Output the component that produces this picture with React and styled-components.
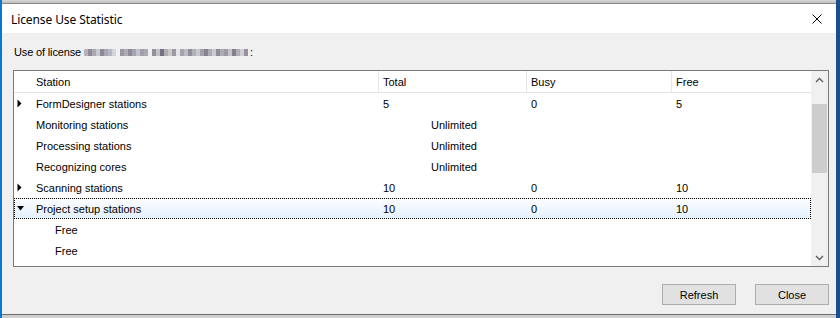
import React from 'react';
import styled, { createGlobalStyle } from 'styled-components';

const GlobalStyle = createGlobalStyle`
  html, body {
    margin: 0;
    padding: 0;
    background: #cfcfcf;
  }
  body {
    font-family: "Liberation Sans", Arial, sans-serif;
    font-size: 11px;
    color: #000;
  }
`;

const Desktop = styled.div`
  width: 840px;
  height: 318px;
  box-sizing: border-box;
  display: flex;
  flex-direction: column;
  padding: 3px 0 3px 0;
  border-left: 2px solid #0a78d2;
  border-right: 4px solid #17508f;
  background: linear-gradient(#d8d8d8, #bdbdbd 3px, #cfcfcf 3px);
`;

const Window = styled.div`
  flex: 1;
  display: flex;
  flex-direction: column;
  background: #f0f0f0;
  border-top: 1px solid #8a8a8a;
  border-bottom: 1px solid #6e6e6e;
`;

const TitleBar = styled.div`
  height: 29px;
  display: flex;
  align-items: center;
  justify-content: space-between;
  padding: 0 10px 0 9px;
  background: #fff;
`;

const Title = styled.span`
  font-family: "Noto Sans", "Liberation Sans", sans-serif;
  font-size: 12px;
  padding-top: 1px;
  letter-spacing: -0.1px;
`;

const CloseGlyph = styled.svg`
  width: 10px;
  height: 10px;
  margin-right: 4px;
`;

const Body = styled.div`
  flex: 1;
  display: flex;
  flex-direction: column;
  padding: 12px 7px 0 11px;
`;

const LicenseLine = styled.div`
  display: flex;
  align-items: center;
  height: 13px;
  padding-left: 1px;
  letter-spacing: -0.15px;
`;

const Blur = styled.span`
  display: inline-flex;
  align-items: center;
  height: 7px;
  margin: 1px 2px 0 3px;
`;

const BlurCell = styled.span`
  width: 4px;
  height: 7px;
  background: ${(p) => p.c};
`;

const ListBox = styled.div`
  margin-top: 12px;
  height: 197px;
  box-sizing: border-box;
  border: 1px solid #7a7a7a;
  background: #fff;
  display: flex;
`;

const ListArea = styled.div`
  flex: 1;
  display: flex;
  flex-direction: column;
`;

const Header = styled.div`
  display: grid;
  grid-template-columns: 365px 148px 145px 1fr;
  height: 21px;
  border-bottom: 1px solid #e5e5e5;
`;

const HeadCell = styled.div`
  display: flex;
  align-items: center;
  padding-left: ${(p) => p.indent || 4}px;
  border-left: ${(p) => (p.first ? 'none' : '1px solid #e5e5e5')};
  margin-left: ${(p) => (p.first ? 0 : -1)}px;
`;

const Row = styled.div`
  display: grid;
  grid-template-columns: 365px 148px 145px 1fr;
  height: 21px;
  box-sizing: border-box;
  align-items: center;
  border: 1px ${(p) => (p.selected ? 'dotted #000' : 'solid transparent')};
  background: ${(p) => (p.selected ? 'linear-gradient(#fbfdff, #e3f0fb)' : 'transparent')};
`;

const NameCell = styled.div`
  display: flex;
  align-items: center;
  padding-left: ${(p) => p.indent}px;
  margin-left: -1px;
`;

const Expander = styled.span`
  width: 19px;
  margin-left: 3px;
  display: flex;
  align-items: center;
`;

const Cell = styled.div`
  padding-left: ${(p) => p.pad || 3}px;
`;

const SpanCell = styled.div`
  text-align: center;
`;

const ScrollBar = styled.div`
  width: 17px;
  background: #f0f0f0;
  display: flex;
  flex-direction: column;
`;

const ArrowBox = styled.div`
  height: 17px;
  display: flex;
  align-items: center;
  justify-content: center;
`;

const Thumb = styled.div`
  margin: ${(p) => p.top}px 1px 0 1px;
  height: 69px;
  background: #cdcdcd;
`;

const Footer = styled.div`
  display: flex;
  justify-content: flex-end;
  gap: 19px;
  padding: 17px 0 0 0;
`;

const Button = styled.button`
  width: 74px;
  height: 21px;
  padding: 0;
  border: 1px solid #adadad;
  background: #e1e1e1;
  font-family: "Liberation Sans", Arial, sans-serif;
  font-size: 11px;
  color: #000;
`;

const blurColors = [
  '#b4b2ba', '#8f8a96', '#aca7b0', '#c9cbd3', '#8d8a94', '#a6a7b2', '#b3b7c8', '#d2d4dc',
  '#f0f0f0', '#9c97a2', '#aeadb7', '#8e8a95', '#a5a4ad', '#bcc2d2', '#a19ea8', '#aba9b1',
  '#f0f0f0', '#958f9b', '#c0c2c4', '#776f83', '#b0adb5', '#c8cbc0', '#9b98a2', '#e4e4e8',
  '#a6a3ac', '#bbbdc9', '#928e99', '#b4b0b8', '#c6c8d2', '#a3a0aa', '#88818f', '#aeacb4',
  '#cacbd2', '#8f8b97', '#adacb4', '#9e9aa4', '#c3c4cb', '#857f8d', '#b0adb6', '#ced0d6',
  '#96929d',
];

const rows = [
  { name: 'FormDesigner stations', exp: 'closed', total: '5', busy: '0', free: '5' },
  { name: 'Monitoring stations', unlimited: true },
  { name: 'Processing stations', unlimited: true },
  { name: 'Recognizing cores', unlimited: true },
  { name: 'Scanning stations', exp: 'closed', total: '10', busy: '0', free: '10' },
  { name: 'Project setup stations', exp: 'open', total: '10', busy: '0', free: '10', selected: true },
  { name: 'Free', child: true },
  { name: 'Free', child: true },
];

function Triangle({ open }) {
  return open ? (
    <svg width="8" height="5" viewBox="0 0 8 5">
      <path d="M0 0 L7 0 L3.5 4.5 Z" fill="#000" />
    </svg>
  ) : (
    <svg width="5" height="9" viewBox="0 0 5 9">
      <path d="M0.5 0.5 L4.5 4.5 L0.5 8.5 Z" fill="#000" />
    </svg>
  );
}

function Chevron({ down }) {
  return (
    <svg width="9" height="6" viewBox="0 0 9 6">
      <path
        d={down ? 'M1 1 L4.5 4.5 L8 1' : 'M1 5 L4.5 1.5 L8 5'}
        stroke="#606060"
        strokeWidth="1.4"
        fill="none"
      />
    </svg>
  );
}

export default function App() {
  return (
    <>
      <GlobalStyle />
      <Desktop>
        <Window>
          <TitleBar>
            <Title>License Use Statistic</Title>
            <CloseGlyph viewBox="0 0 10 10">
              <path d="M0.5 0.5 L9.5 9.5 M9.5 0.5 L0.5 9.5" stroke="#000" strokeWidth="1" />
            </CloseGlyph>
          </TitleBar>
          <Body>
            <LicenseLine>
              Use of license
              <Blur>
                {blurColors.map((c, i) => (
                  <BlurCell key={i} c={c} />
                ))}
              </Blur>
              :
            </LicenseLine>
            <ListBox>
              <ListArea>
                <Header>
                  <HeadCell first indent={22}>Station</HeadCell>
                  <HeadCell>Total</HeadCell>
                  <HeadCell>Busy</HeadCell>
                  <HeadCell>Free</HeadCell>
                </Header>
                {rows.map((r, i) => (
                  <Row key={i} selected={r.selected}>
                    <NameCell indent={r.child ? 41 : 0}>
                      {!r.child && (
                        <Expander>{r.exp && <Triangle open={r.exp === 'open'} />}</Expander>
                      )}
                      {r.name}
                    </NameCell>
                    {r.unlimited ? (
                      <SpanCell>Unlimited</SpanCell>
                    ) : (
                      <Cell>{r.total}</Cell>
                    )}
                    <Cell pad={3}>{r.busy}</Cell>
                    <Cell pad={3}>{r.free}</Cell>
                  </Row>
                ))}
              </ListArea>
              <ScrollBar>
                <ArrowBox>
                  <Chevron />
                </ArrowBox>
                <Thumb top={16} />
                <div style={{ flex: 1 }} />
                <ArrowBox>
                  <Chevron down />
                </ArrowBox>
              </ScrollBar>
            </ListBox>
            <Footer>
              <Button>Refresh</Button>
              <Button>Close</Button>
            </Footer>
          </Body>
        </Window>
      </Desktop>
    </>
  );
}
